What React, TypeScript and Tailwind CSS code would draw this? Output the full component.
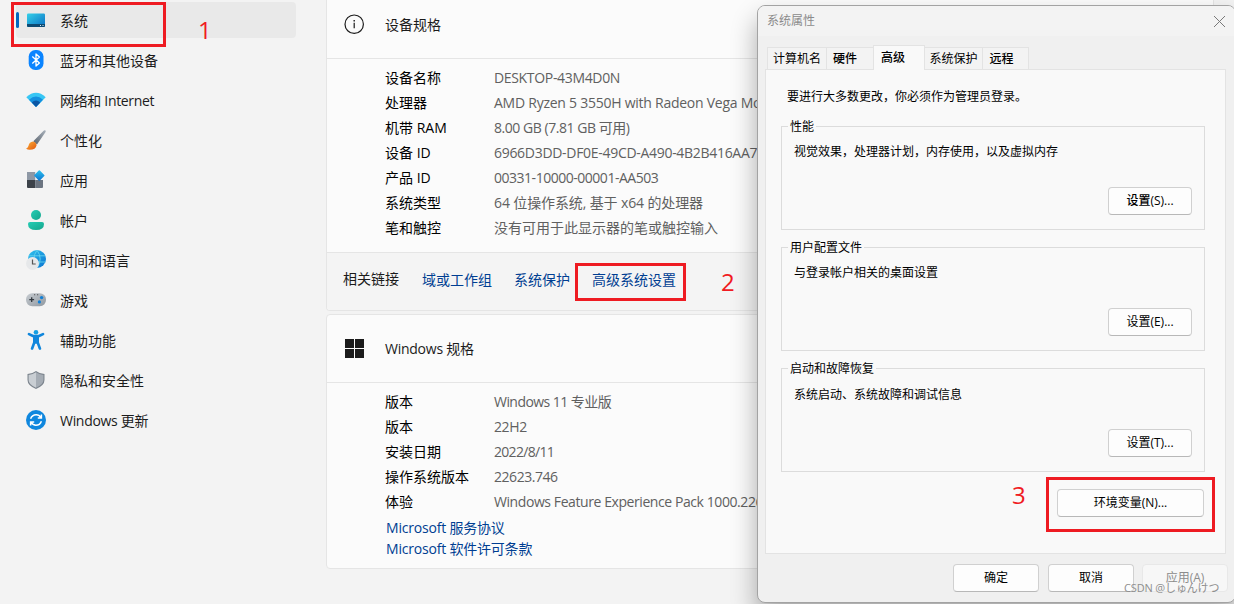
import { ReactNode } from 'react';

interface NavItem {
  label: string;
  icon: ReactNode;
  tracking?: string;
}

interface Spec {
  name: string;
  value: string;
  tracking?: string;
}

const navItems: NavItem[] = [
  {
    label: '系统',
    icon: (
      <>
        <rect x="1" y="3.4" width="18" height="13.6" rx="1.2" fill="url(#screen)" />
        <path d="M1 14h18v1.8q0 1.2-1.2 1.2H2.2Q1 17 1 15.8z" fill="#0d4a72" />
        <path d="M14 15h1v1h-1zM16.5 15h1v1h-1z" fill="#d6eefa" />
      </>
    ),
  },
  {
    label: '蓝牙和其他设备',
    icon: (
      <>
        <rect x="2.7" y="0" width="14.8" height="20" rx="6.6" fill="#0a84ff" />
        <path
          d="M6.3 6.6 13.4 13 10 16V4l3.4 3-7.1 6.4"
          fill="none"
          stroke="#fff"
          strokeWidth="1.3"
          strokeLinejoin="round"
        />
      </>
    ),
  },
  {
    label: '网络和 Internet',
    tracking: 'tracking-[-0.33px]',
    icon: (
      <>
        <path d="M.3 7.2Q10-1.6 19.7 7.2L10 17z" fill="#37c6f4" />
        <path d="M3 9.8Q10 3.2 17 9.8L10 17z" fill="#1490df" />
        <path d="M5.8 12.6Q10 8.4 14.2 12.6L10 17z" fill="#0b56a4" />
      </>
    ),
  },
  {
    label: '个性化',
    icon: (
      <>
        <path d="M19.2.3q1 .6.2 2L11 14.4 7.3 11.2 17.4.9q.9-1 1.8-.6z" fill="url(#handle)" />
        <path d="M7 11.4q3.3.7 3.6 3.8-1 4.6-7 4.5-2.3 0-3.5-1.2 2-.5 2.4-2.8Q3.3 11.7 7 11.4z" fill="url(#bristle)" />
      </>
    ),
  },
  {
    label: '应用',
    icon: (
      <>
        <path d="M1 2h8.2v8H1z" fill="#8e98a5" />
        <path d="M1 10h8.2v8H2q-1 0-1-1z" fill="#3c4249" />
        <path d="M9.2 10H17v7q0 1-1 1H9.2z" fill="#6b7480" />
        <rect x="9.4" y="1.6" width="7.8" height="7.8" rx=".8" transform="rotate(45 13.3 5.5)" fill="url(#blue)" />
      </>
    ),
  },
  {
    label: '帐户',
    icon: (
      <g fill="url(#teal)">
        <circle cx="10" cy="5" r="5" />
        <path d="M4 12h12q2 0 2 2 0 6-8 6t-8-6q0-2 2-2z" />
      </g>
    ),
  },
  {
    label: '时间和语言',
    icon: (
      <>
        <circle cx="11" cy="9" r="9" fill="url(#blue)" />
        <path
          d="M3 5.8h16M3 12h16.5M11 .2Q4.6 9 11 17.8M11 .2q6.4 8.8 0 17.6"
          fill="none"
          stroke="#62d3ee"
          strokeWidth=".9"
        />
        <circle cx="6.5" cy="13.5" r="6.5" fill="#e6e8ea" />
        <path d="M6.5 9.6v4.4h3.2" fill="none" stroke="#555" strokeWidth="1.2" />
      </>
    ),
  },
  {
    label: '游戏',
    icon: (
      <>
        <rect x="0" y="3.2" width="20" height="13" rx="6.2" fill="url(#pad)" />
        <path d="M3.3 9.6h4.8M5.7 7.2V12" stroke="#343a40" strokeWidth="1.3" />
        <circle cx="15.6" cy="7.6" r="1.7" fill="#1080d8" />
        <circle cx="13.4" cy="11.9" r="1.6" fill="#1080d8" />
        <path d="M8 4.2h1.2v1H8zM11 4.2h1.2v1H11z" fill="#555" />
      </>
    ),
  },
  {
    label: '辅助功能',
    icon: (
      <>
        <circle cx="10" cy="2.3" r="2.3" fill="#159ee2" />
        <path
          d="M3 4.1 7 6h6l4-1.9M8.3 6.5v6l-2.2 6M11.7 6.5v6l2.2 6M10 6v6.5"
          fill="none"
          stroke="#1086dc"
          strokeWidth="2.6"
          strokeLinecap="round"
          strokeLinejoin="round"
        />
      </>
    ),
  },
  {
    label: '隐私和安全性',
    icon: (
      <>
        <path d="M10 1q4 3 8.5 3v6q0 5.5-8.5 9-8.5-3.5-8.5-9V4Q6 4 10 1z" fill="#7d858e" />
        <path d="M10 2.3Q6 5 2.6 5v5q0 4.5 7.4 7.8z" fill="#c9ced3" />
        <path d="M10 2.3Q14 5 17.4 5v5q0 4.5-7.4 7.8z" fill="#a5acb4" />
      </>
    ),
  },
  {
    label: 'Windows 更新',
    tracking: 'tracking-[-0.3px]',
    icon: (
      <>
        <circle cx="10" cy="10" r="10" fill="#0f87de" />
        <path
          d="M4.6 8.8Q6 4.8 10.2 4.8q3 0 4.7 2.8M15.4 4.5v3.6h-3.6M15.4 11.2q-1.4 4-5.6 4-3 0-4.7-2.8M4.6 15.5v-3.6h3.6"
          fill="none"
          stroke="#fff"
          strokeWidth="1.5"
        />
      </>
    ),
  },
];

const deviceSpecs: Spec[] = [
  { name: '设备名称', value: 'DESKTOP-43M4D0N', tracking: 'tracking-[-0.33px]' },
  { name: '处理器', value: 'AMD Ryzen 5 3550H with Radeon Vega Mobile Gfx', tracking: 'tracking-[-0.25px]' },
  { name: '机带 RAM', value: '8.00 GB (7.81 GB 可用)', tracking: 'tracking-[-0.46px]' },
  { name: '设备 ID', value: '6966D3DD-DF0E-49CD-A490-4B2B416AA7', tracking: 'tracking-[-0.3px]' },
  { name: '产品 ID', value: '00331-10000-00001-AA503', tracking: 'tracking-[-0.48px]' },
  { name: '系统类型', value: '64 位操作系统, 基于 x64 的处理器', tracking: 'tracking-[-0.12px]' },
  { name: '笔和触控', value: '没有可用于此显示器的笔或触控输入' },
];

const windowsSpecs: Spec[] = [
  { name: '版本', value: 'Windows 11 专业版', tracking: 'tracking-[-0.55px]' },
  { name: '版本', value: '22H2', tracking: 'tracking-[-0.4px]' },
  { name: '安装日期', value: '2022/8/11', tracking: 'tracking-[-0.7px]' },
  { name: '操作系统版本', value: '22623.746', tracking: 'tracking-[-0.46px]' },
  { name: '体验', value: 'Windows Feature Experience Pack 1000.226', tracking: 'tracking-[-0.42px]' },
];

const groups = [
  {
    title: '性能',
    text: '视觉效果，处理器计划，内存使用，以及虚拟内存',
    button: '设置(S)...',
    buttonClass: 'w-[84px] font-medium',
  },
  { title: '用户配置文件', text: '与登录帐户相关的桌面设置', button: '设置(E)...', buttonClass: 'w-[84px]' },
  { title: '启动和故障恢复', text: '系统启动、系统故障和调试信息', button: '设置(T)...', buttonClass: 'w-[84px]' },
];

function Gradients() {
  return (
    <svg className="absolute size-0">
      <defs>
        <linearGradient id="screen" x1="0" y1="0" x2="1" y2="1">
          <stop stopColor="#35d0e8" />
          <stop offset="1" stopColor="#0a6fc4" />
        </linearGradient>
        <linearGradient id="blue" x1="0" y1="0" x2="1" y2="1">
          <stop stopColor="#2fc3ee" />
          <stop offset="1" stopColor="#0a72d0" />
        </linearGradient>
        <linearGradient id="teal" x1="0" y1="0" x2="1" y2="1">
          <stop stopColor="#25cdb5" />
          <stop offset="1" stopColor="#14a58c" />
        </linearGradient>
        <linearGradient id="handle" x1="1" y1="0" x2="0" y2="1">
          <stop stopColor="#a9b2bc" />
          <stop offset="1" stopColor="#59626c" />
        </linearGradient>
        <linearGradient id="bristle" x1="0" y1="0" x2="1" y2="1">
          <stop stopColor="#fbb03a" />
          <stop offset="1" stopColor="#e2570c" />
        </linearGradient>
        <linearGradient id="pad" x1="0" y1="0" x2="1" y2="1">
          <stop stopColor="#c8cdd2" />
          <stop offset="1" stopColor="#8f979f" />
        </linearGradient>
      </defs>
    </svg>
  );
}

function Sidebar() {
  return (
    <nav className="w-[326px] shrink-0 pl-4 pt-0.5">
      <ul className="flex flex-col gap-1">
        {navItems.map((item, i) => (
          <li
            key={item.label}
            className={
              i === 0
                ? 'flex h-9 w-[280px] items-center rounded bg-[#e9e9e9]'
                : 'flex h-9 w-[280px] items-center rounded'
            }
          >
            <span className={i === 0 ? 'h-4 w-[3px] rounded-full bg-[#0067c0]' : 'w-[3px]'} />
            <svg viewBox="0 0 20 20" className="ml-[7px] size-5">
              {item.icon}
            </svg>
            <span className={`ml-3.5 pt-0.5 ${item.tracking ?? ''}`}>{item.label}</span>
          </li>
        ))}
      </ul>
    </nav>
  );
}

function SpecList({ specs }: { specs: Spec[] }) {
  return (
    <dl className="pl-[58px]">
      {specs.map((spec) => (
        <div key={spec.name + spec.value} className="flex h-[25px] items-center whitespace-nowrap">
          <dt className="w-[109px] shrink-0 text-black">{spec.name}</dt>
          <dd className={`text-[#606060] ${spec.tracking ?? ''}`}>{spec.value}</dd>
        </div>
      ))}
    </dl>
  );
}

function Settings() {
  return (
    <main className="w-[888px] shrink-0">
      <section className="h-[311px] overflow-hidden rounded-b border border-t-0 border-[#e5e5e5] bg-[#fbfbfb]">
        <header className="flex h-[59px] items-center border-b border-[#e5e5e5] pb-2.5 pl-[17px]">
          <svg viewBox="0 0 20 20" className="size-5" fill="none" stroke="#1b1b1b" strokeWidth="1.2">
            <circle cx="10.2" cy="10.2" r="9.2" />
            <path d="M10.2 8.7v5.5" />
            <path d="M10.2 6v1.4" strokeWidth="1.4" />
          </svg>
          <h2 className="ml-[21px] pt-0.5">设备规格</h2>
        </header>
        <div className="h-[193px] pt-1.5">
          <SpecList specs={deviceSpecs} />
        </div>
        <footer className="flex h-[58px] items-center border-t border-[#e5e5e5] bg-[#f4f4f4] pb-1 pl-4 text-[#003e92]">
          <span className="w-[79px] pb-0.5 text-[#1b1b1b]">相关链接</span>
          <a className="w-[92px]">域或工作组</a>
          <a className="w-[78px]">系统保护</a>
          <a>高级系统设置</a>
        </footer>
      </section>
      <section className="mt-[3px] h-[255px] rounded border border-[#e5e5e5] bg-[#fbfbfb]">
        <header className="flex h-[68px] items-center border-b border-[#e5e5e5] pl-[18px]">
          <svg viewBox="0 0 19 19" className="size-[19px]" fill="#1b1b1b">
            <path d="M0 0h9v9H0zM10 0h9v9h-9zM0 10h9v9H0zM10 10h9v9h-9z" />
          </svg>
          <h2 className="ml-[21px] tracking-[-0.25px]">Windows 规格</h2>
        </header>
        <div className="pt-1.5">
          <SpecList specs={windowsSpecs} />
        </div>
        <div className="flex flex-col pl-[59px] pt-[3px] leading-[21px] tracking-[-0.2px] text-[#003e92]">
          <a>Microsoft 服务协议</a>
          <a>Microsoft 软件许可条款</a>
        </div>
      </section>
    </main>
  );
}

function DialogButton({ className, children }: { className: string; children: ReactNode }) {
  return (
    <button
      type="button"
      className={`h-7 rounded border border-[#d0d0d0] border-b-[#b8b8b8] bg-[#fdfdfd] ${className}`}
    >
      {children}
    </button>
  );
}

function SystemProperties() {
  return (
    <div className="absolute left-[757px] top-[5px] flex h-[598px] w-[479px] flex-col overflow-hidden rounded-lg border border-[#a3a3a3] bg-[#f0f0f0] text-xs leading-4 text-black shadow-[0_14px_26px_rgba(0,0,0,0.32)]">
      <header className="flex h-[30px] shrink-0 items-center justify-between bg-[#f3f3f3] pl-[9px] pr-2.5 text-[#8b8b8b]">
        <span>系统属性</span>
        <svg viewBox="0 0 10 10" className="size-[11px]" stroke="#777" strokeWidth=".9">
          <path d="M0 0l10 10M10 0L0 10" />
        </svg>
      </header>
      <div className="flex h-[33px] shrink-0 items-end pl-[9px] text-center">
        <span className="h-[22px] w-[60px] border border-b-0 border-[#e3e3e3] bg-[#f3f3f3] pt-[3px]">计算机名</span>
        <span className="h-[22px] w-[46px] border-t border-[#e3e3e3] bg-[#f3f3f3] pr-2.5 pt-[3px] font-medium">硬件</span>
        <span className="z-10 -mb-px h-[25px] w-[52px] border border-b-0 border-[#e3e3e3] bg-[#f9f9f9] pr-3 pt-1 font-medium">
          高级
        </span>
        <span className="h-[22px] w-[57px] border-t border-[#e3e3e3] bg-[#f3f3f3] pt-[3px]">系统保护</span>
        <span className="h-[22px] w-[47px] border border-b-0 border-[#e3e3e3] bg-[#f3f3f3] pr-2 pt-[3px] font-medium">远程</span>
      </div>
      <div className="ml-[7px] flex h-[485px] w-[461px] shrink-0 flex-col border border-[#e3e3e3] bg-[#f9f9f9] px-[15px] pt-[19px]">
        <p className="pl-1.5">要进行大多数更改，你必须作为管理员登录。</p>
        <div className="mt-[13px] flex flex-col gap-[9px]">
          {groups.map((group, i) => (
            <fieldset key={group.title} className="flex h-28 w-[424px] flex-col border border-[#dcdcdc] pl-3 pr-3">
              <legend className="-ml-1.5 px-0.5">
                <span className="block translate-y-px">{group.title}</span>
              </legend>
              <p className={i === 2 ? 'mb-[26px] mt-[11px]' : 'mb-[27px] mt-2.5'}>{group.text}</p>
              <DialogButton className={`self-end ${group.buttonClass}`}>{group.button}</DialogButton>
            </fieldset>
          ))}
        </div>
        <DialogButton className="mr-1.5 mt-[17px] w-[147px] self-end">环境变量(N)...</DialogButton>
      </div>
      <footer className="flex pl-[195px] pt-2.5">
        <DialogButton className="w-[86px]">确定</DialogButton>
        <DialogButton className="ml-[9px] w-[86px]">取消</DialogButton>
        <button
          type="button"
          disabled
          className="ml-2 h-7 w-[86px] rounded border border-[#e8e8e8] bg-[#f7f7f7] text-[#8c8c8c]"
        >
          应用(A)
        </button>
      </footer>
    </div>
  );
}

function Annotations() {
  return (
    <div className="pointer-events-none text-2xl leading-6 text-[#f01b22]">
      <div className="absolute left-[11px] top-[2px] h-[45px] w-[155px] border-3 border-[#ee1b22]" />
      <span className="absolute left-[198px] top-[18px]">1</span>
      <div className="absolute left-[575px] top-[263px] h-[38px] w-[111px] border-3 border-[#ee1b22]" />
      <span className="absolute left-[721px] top-[270px]">2</span>
      <div className="absolute left-[1046px] top-[477px] h-[55px] w-[169px] border-3 border-[#ee1b22]" />
      <span className="absolute left-[1012px] top-[483px]">3</span>
    </div>
  );
}

export default function App() {
  return (
    <div className="relative h-[604px] w-[1234px] overflow-hidden bg-[#f3f3f3] font-['Open_Sans','Noto_Sans_CJK_SC',sans-serif] text-sm leading-5 text-[#1b1b1b]">
      <Gradients />
      <div className="flex">
        <Sidebar />
        <Settings />
      </div>
      <SystemProperties />
      <Annotations />
      <span className="absolute left-[1124px] top-[580px] whitespace-nowrap text-[11px] leading-4 tracking-[-0.15px] text-[#8e8e8e]">
        CSDN @しゅんけつ
      </span>
    </div>
  );
}
